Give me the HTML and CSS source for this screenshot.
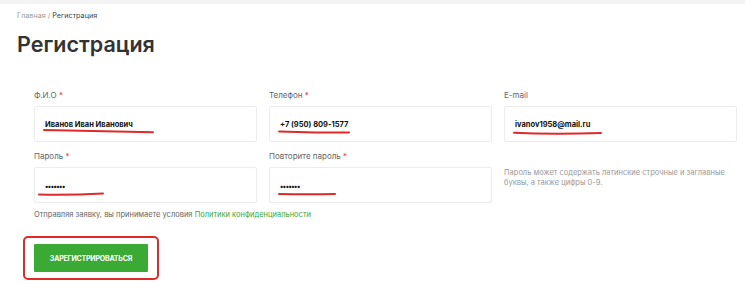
FILE: index.html
```html
<!DOCTYPE html>
<html>

<head>
  <meta charset="utf-8">
  <link rel="stylesheet" href="styles.css">
</head>

<body>
  <div class="topbar"></div>

  <div class="page">
    <div class="breadcrumbs">
      <span class="crumb">Главная</span> / <span class="crumb-current">Регистрация</span>
    </div>
    <h1 class="page-title">Регистрация</h1>

    <form class="reg-form">
      <div class="form-grid">
        <div class="form-group">
          <label class="form-label">Ф.И.О <span class="req">*</span></label>
          <div class="field-box">
            <input class="form-input" type="text" value="Иванов Иван Иванович">
            <svg class="mark" style="left: 9px; top: 22px; width: 111px;" viewBox="0 0 111 6" preserveAspectRatio="none">
              <path d="M1 2 C30 2.8 70 3.6 110 4.2" />
            </svg>
          </div>
        </div>

        <div class="form-group">
          <label class="form-label">Телефон <span class="req">*</span></label>
          <div class="field-box">
            <input class="form-input" type="text" value="+7 (950) 809-1577">
            <svg class="mark" style="left: 9px; top: 23px; width: 72px;" viewBox="0 0 72 6" preserveAspectRatio="none">
              <path d="M1 2.4 C20 3 45 3.6 71 3.6" />
            </svg>
          </div>
        </div>

        <div class="form-group">
          <label class="form-label">E-mail</label>
          <div class="field-box">
            <input class="form-input" type="text" value="ivanov1958@mail.ru">
            <svg class="mark" style="left: 9px; top: 24px; width: 89px;" viewBox="0 0 89 6" preserveAspectRatio="none">
              <path d="M1 2.8 C25 3.8 60 3.8 88 3" />
            </svg>
          </div>
        </div>

        <div class="form-group">
          <label class="form-label">Пароль <span class="req">*</span></label>
          <div class="field-box">
            <input class="form-input dots" type="text" value="•••••••">
            <svg class="mark" style="left: 4px; top: 24px; width: 66px;" viewBox="0 0 66 6" preserveAspectRatio="none">
              <path d="M1 3.6 C20 4 45 3.6 65 2.6" />
            </svg>
          </div>
        </div>

        <div class="form-group">
          <label class="form-label">Повторите пароль <span class="req">*</span></label>
          <div class="field-box">
            <input class="form-input dots" type="text" value="•••••••">
            <svg class="mark" style="left: 9px; top: 24px; width: 58px;" viewBox="0 0 58 6" preserveAspectRatio="none">
              <path d="M1 3 C20 3.4 40 3.4 57 3" />
            </svg>
          </div>
        </div>

        <div class="form-hint">
          Пароль может содержать латинские строчные и заглавные буквы, а также цифры 0-9.
        </div>
      </div>

      <p class="agree">
        Отправляя заявку, вы принимаете условия <a class="agree-link" href="#">Политики конфиденциальности</a>
      </p>

      <div class="submit-wrap">
        <button class="btn-submit" type="button">Зарегистрироваться</button>
      </div>
    </form>
  </div>
</body>

</html>
```

FILE: styles.css
```css
body {
  margin: 0;
  background: #fff;
  font-family: Inter, "Noto Sans", sans-serif;
  color: #333;
}

.topbar {
  height: 4px;
  background: #f4f4f4;
}

.page {
  padding: 0 17px;
}

.breadcrumbs {
  margin-top: 7px;
  font-size: 7.2px;
  line-height: 9px;
  color: #999;
}

.crumb-current {
  color: #444;
}

.page-title {
  margin: 10px 0 0;
  font-size: 21.5px;
  line-height: 28px;
  font-weight: 600;
  color: #333;
}

.reg-form {
  padding: 31px 0 0 17px;
}

.form-grid {
  display: grid;
  grid-template-columns: 223px 223px 233px;
  column-gap: 12px;
  row-gap: 8px;
}

.form-label {
  display: block;
  font-size: 8px;
  line-height: 12px;
  color: #666;
  margin-bottom: 5px;
}

.req {
  color: #e53935;
}

.field-box {
  position: relative;
}

.form-input {
  display: block;
  box-sizing: border-box;
  width: 100%;
  height: 36px;
  padding: 0 10px;
  border: 1px solid #ececec;
  border-radius: 2px;
  background: #fff;
  font-family: inherit;
  font-size: 7.5px;
  font-weight: 700;
  color: #111;
  outline: none;
}

.form-input.dots {
  font-size: 7px;
  letter-spacing: -0.5px;
  padding-top: 2px;
}

.mark {
  position: absolute;
  height: 6px;
  overflow: visible;
}

.mark path {
  fill: none;
  stroke: #e02a2a;
  stroke-width: 2;
  stroke-linecap: round;
  vector-effect: non-scaling-stroke;
}

.form-hint {
  align-self: end;
  padding: 0 0 15px;
  font-size: 7.5px;
  line-height: 10px;
  color: #999;
}

.agree {
  margin: 6px 0 0;
  font-size: 7.5px;
  line-height: 12px;
  color: #666;
}

.agree-link {
  color: #3aa63a;
  text-decoration: none;
}

.submit-wrap {
  display: inline-block;
  margin: 15px 0 0 -11px;
  padding: 6px 9px;
  border: 2px solid #e02a2a;
  border-radius: 5px;
}

.btn-submit {
  display: block;
  width: 114px;
  height: 28px;
  border: none;
  border-radius: 1px;
  background: #3aaa35;
  color: #fff;
  font-family: inherit;
  font-size: 7px;
  font-weight: 700;
  text-transform: uppercase;
  letter-spacing: -0.2px;
}
```
